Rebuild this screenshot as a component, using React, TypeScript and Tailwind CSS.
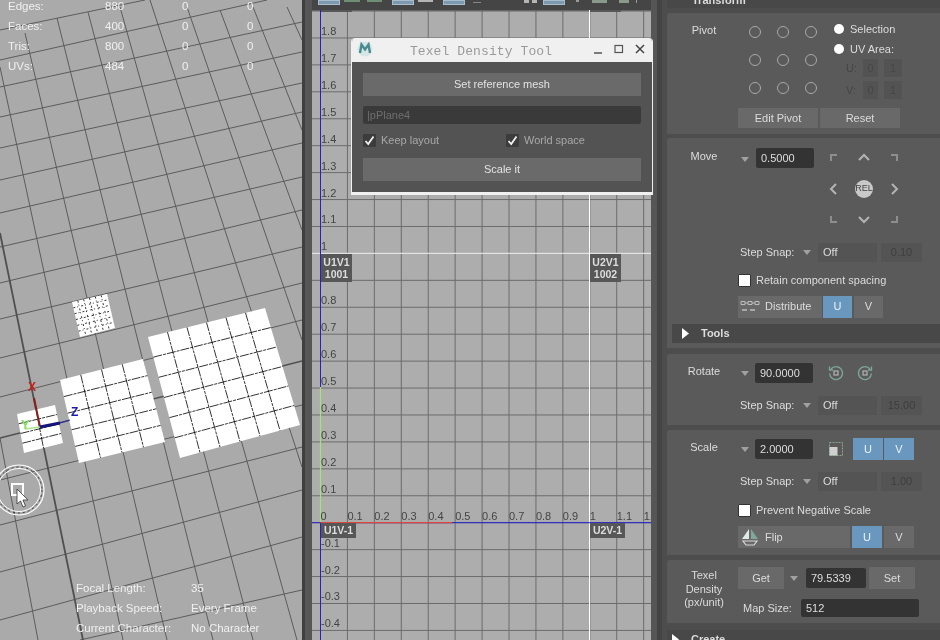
import type { ReactNode } from 'react';

type Pt = [number, number];

const GROUND_ACROSS: [number, number, number, number][] = [
  [0, 30, 145, 0], [0, 60, 267, 0], [0, 87, 302, 22], [0, 117, 302, 52], [0, 148, 302, 83],
  [0, 180, 302, 112], [0, 213, 302, 143], [0, 247, 302, 177], [0, 283, 302, 210], [0, 319, 302, 247],
  [0, 358, 302, 283], [0, 397, 302, 320], [0, 480, 302, 405], [0, 525, 302, 447],
  [0, 572, 302, 490], [0, 620, 302, 537], [80, 640, 302, 590],
];

const GROUND_DEPTH: [number, number, number, number][] = [
  [0, 67, 123, 640], [25, 33, 167, 640], [57, 18, 213, 640], [88, 12, 253, 640], [120, 7, 297, 640],
  [150, 0, 302, 467], [187, 7, 302, 340], [220, 10, 302, 230], [253, 7, 302, 130], [287, 7, 302, 40],
  [0, 438, 38, 640],
];

const SHELLS: { q: [Pt, Pt, Pt, Pt]; cols: number; rows: number; dash: string }[] = [
  { q: [[72, 302], [107, 294], [115, 328], [80, 337]], cols: 6, rows: 6, dash: '2 2 1 3' },
  { q: [[60, 380], [143, 359], [165, 442], [79, 463]], cols: 4, rows: 5, dash: '9 1 3 1' },
  { q: [[148, 337], [265, 308], [300, 425], [180, 458]], cols: 6, rows: 6, dash: '9 1 3 1' },
  { q: [[17, 414], [55, 405], [63, 443], [24, 453]], cols: 2, rows: 4, dash: '9 1 3 1' },
];

function lerp(a: Pt, b: Pt, t: number): Pt {
  return [a[0] + (b[0] - a[0]) * t, a[1] + (b[1] - a[1]) * t];
}

function Shell({ q, cols, rows, dash }: { q: [Pt, Pt, Pt, Pt]; cols: number; rows: number; dash: string }) {
  const lines: [Pt, Pt][] = [];
  for (let i = 1; i < cols; i++) lines.push([lerp(q[0], q[1], i / cols), lerp(q[3], q[2], i / cols)]);
  for (let j = 1; j < rows; j++) lines.push([lerp(q[0], q[3], j / rows), lerp(q[1], q[2], j / rows)]);
  return (
    <g>
      <polygon points={q.map((p) => p.join(',')).join(' ')} fill="#fff" />
      {lines.map(([a, b], i) => (
        <line key={i} x1={a[0]} y1={a[1]} x2={b[0]} y2={b[1]} stroke="#000" strokeWidth={0.8} strokeDasharray={dash} />
      ))}
    </g>
  );
}

function Viewport() {
  return (
    <div className="relative h-full w-[302px] shrink-0 overflow-hidden bg-[#aaaaaa] font-['Liberation_Sans',sans-serif] text-[11.5px] text-[#f0f0f0]">
      <svg width="302" height="640" className="block">
        {GROUND_ACROSS.map(([a, b, c, d], i) => (
          <line key={i} x1={a} y1={b} x2={c} y2={d} stroke="#5c5c5c" strokeWidth={1} />
        ))}
        {GROUND_DEPTH.map(([a, b, c, d], i) => (
          <line key={i} x1={a} y1={b} x2={c} y2={d} stroke="#5c5c5c" strokeWidth={1} />
        ))}
        <line x1="0" y1="438" x2="302" y2="361" stroke="#505050" strokeWidth={1.6} />
        <line x1="0" y1="233" x2="83" y2="640" stroke="#505050" strokeWidth={1.8} />
        {SHELLS.map((s, i) => (
          <Shell key={i} {...s} />
        ))}
        {/* gizmo */}
        <line x1="40" y1="427" x2="34" y2="398" stroke="#8a1f1f" strokeWidth={2} />
        <line x1="40" y1="427" x2="25" y2="429" stroke="#a6e88a" strokeWidth={1.5} />
        <line x1="40" y1="427" x2="60" y2="423" stroke="#14147a" strokeWidth={3} />
        <line x1="60" y1="423" x2="70" y2="420" stroke="#2a2ab0" strokeWidth={1} />
        <text x="28" y="391" className="fill-[#c8201c] text-[12px] font-bold">X</text>
        <text x="21" y="429" className="fill-[#7fe05a] text-[13px] font-bold">Y</text>
        <text x="71" y="416" className="fill-[#1c1ca8] text-[12px] font-bold">Z</text>
        {/* tool cursor */}
        <circle cx="19" cy="490" r="25" fill="none" stroke="#fff" strokeWidth={1.2} />
        <circle cx="19" cy="490" r="23" fill="none" stroke="#222" strokeWidth={0.8} strokeDasharray="2 3" />
        <circle cx="19" cy="490" r="21.5" fill="none" stroke="#fff" strokeWidth={1} />
        <rect x="12" y="484" width="11" height="11" fill="none" stroke="#fff" strokeWidth={2} />
        <path d="M17 489 L17 504 L20.5 501 L23 507 L25.5 506 L23 500 L28 500 Z" fill="#fff" stroke="#333" strokeWidth={0.8} />
      </svg>

      <div className="absolute left-2 top-[-3px] w-[260px]">
        {[
          ['Edges:', '880'],
          ['Faces:', '400'],
          ['Tris:', '800'],
          ['UVs:', '484'],
        ].map(([name, value]) => (
          <div key={name} className="flex h-5 items-center">
            <span className="w-[97px]">{name}</span>
            <span className="w-[77px]">{value}</span>
            <span className="w-[65px]">0</span>
            <span>0</span>
          </div>
        ))}
      </div>

      <div className="absolute left-[76px] top-[579px]">
        {[
          ['Focal Length:', '35'],
          ['Playback Speed:', 'Every Frame'],
          ['Current Character:', 'No Character'],
        ].map(([name, value]) => (
          <div key={name} className="flex h-5 items-center">
            <span className="w-[115px]">{name}</span>
            <span>{value}</span>
          </div>
        ))}
      </div>
    </div>
  );
}

function UvToolbar() {
  const blue = 'h-[5px] border border-[#a9bccb] bg-[#7d99b0]';
  return (
    <div className="flex h-[10px] shrink-0 items-start bg-[#454545]">
      <div className={`ml-[6px] w-[22px] ${blue}`} />
      <div className="ml-[4px] h-[2px] w-[16px] bg-[#6f8f74]" />
      <div className="ml-[7px] h-[2px] w-[15px] bg-[#6f8f74]" />
      <div className={`ml-[10px] w-[22px] ${blue}`} />
      <div className="ml-[4px] h-[2px] w-[15px] bg-[#b5b5b5]" />
      <div className={`ml-[10px] w-[22px] ${blue}`} />
      <div className="ml-[8px] h-[3px] w-[8px] border-b border-[#888]" />
      <div className="ml-[43px] h-[3px] w-[5px] bg-[#b5b5b5]" />
      <div className="ml-[3px] h-[3px] w-[5px] bg-[#b5b5b5]" />
      <div className={`ml-[6px] w-[22px] ${blue}`} />
      <div className="ml-[11px] h-[2px] w-[3px] bg-[#999]" />
      <div className="ml-[13px] h-[3px] w-[15px] bg-[#8a9a8a]" />
      <div className="ml-[12px] h-[3px] w-[10px] bg-[#8a9a8a]" />
      <div className="ml-[7px] h-[3px] w-[1px] bg-[#999]" />
    </div>
  );
}

function TileTag({ children, cls }: { children: ReactNode; cls: string }) {
  return (
    <div className={`absolute bg-[#575757] text-center text-[10.5px] font-bold leading-[12px] text-[#dddddd] ${cls}`}>
      {children}
    </div>
  );
}

const UV_X0 = 8.5;
const UV_Y0 = 512.7;
const STEP = 26.93;

function UvCanvas() {
  const cols = Array.from({ length: 13 }, (_, i) => i);
  const rows = Array.from({ length: 23 }, (_, i) => i - 4);
  const xTicks = ['0', '0.1', '0.2', '0.3', '0.4', '0.5', '0.6', '0.7', '0.8', '0.9', '1', '1.1', '1.2'];
  const yTicks = ['0.1', '0.2', '0.3', '0.4', '0.5', '0.6', '0.7', '0.8', '0.9', '1', '1.1', '1.2', '1.3', '1.4', '1.5', '1.6', '1.7', '1.8'];
  const negTicks = ['-0.1', '-0.2', '-0.3', '-0.4'];
  return (
    <div className="relative min-h-0 flex-1 overflow-hidden bg-[#adadad] font-['Liberation_Sans',sans-serif]">
      <svg width="339" height="630" className="block">
        {cols.map((c) => (
          <line key={c} x1={UV_X0 + c * STEP} y1="0" x2={UV_X0 + c * STEP} y2="630" stroke="#6c6c6c" strokeWidth={1} />
        ))}
        {rows.map((r) => (
          <line key={r} x1="0" y1={UV_Y0 - r * STEP} x2="339" y2={UV_Y0 - r * STEP} stroke="#6c6c6c" strokeWidth={1} />
        ))}
        <line x1="0" y1="0.7" x2="339" y2="0.7" stroke="#666" strokeWidth={1.5} />
        <line x1="0" y1="243.3" x2="339" y2="243.3" stroke="#fff" strokeWidth={1} />
        <line x1="277.5" y1="0" x2="277.5" y2="630" stroke="#fff" strokeWidth={1} />
        <line x1="0" y1="512.7" x2="339" y2="512.7" stroke="#2222cc" strokeWidth={1} />
        <line x1="8.5" y1="0" x2="8.5" y2="630" stroke="#2222cc" strokeWidth={1} />
        <line x1="8.5" y1="512.7" x2="140" y2="512.7" stroke="#d8483c" strokeWidth={1.2} />
        <line x1="8.5" y1="377" x2="8.5" y2="512" stroke="#a6e07a" strokeWidth={1.2} />
        {xTicks.map((t, i) => (
          <text key={t} x={8.5 + i * STEP} y="510" className="fill-[#444] text-[11px]">{t}</text>
        ))}
        {yTicks.map((t, i) => (
          <text key={t} x="9" y={UV_Y0 - (i + 1) * STEP - 3} className="fill-[#444] text-[11px]">{t}</text>
        ))}
        {negTicks.map((t, i) => (
          <text key={t} x="9" y={UV_Y0 + (i + 1) * STEP - 3} className="fill-[#444] text-[11px]">{t}</text>
        ))}
      </svg>
      <div className="absolute left-[9px] top-0 h-[2px] w-[31px] bg-[#575757]" />
      <div className="absolute left-[278px] top-0 h-[2px] w-[31px] bg-[#575757]" />
      <TileTag cls="left-[9px] top-[244px] w-[31px] pt-[2px] h-[28px]">U1V1<br />1001</TileTag>
      <TileTag cls="left-[278px] top-[244px] w-[31px] pt-[2px] h-[28px]">U2V1<br />1002</TileTag>
      <TileTag cls="left-[9px] top-[513px] w-[35px] h-[15px] leading-[15px]">U1V-1</TileTag>
      <TileTag cls="left-[278px] top-[513px] w-[35px] h-[15px] leading-[15px]">U2V-1</TileTag>
    </div>
  );
}

function DialogCheck({ label }: { label: string }) {
  return (
    <div className="flex items-center gap-[5px]">
      <div className="flex h-[13px] w-[13px] items-center justify-center rounded-[1px] bg-[#3c3c3c]">
        <svg width="11" height="11" viewBox="0 0 11 11">
          <path d="M1.5 6 L4.2 9 L9.5 1.5" fill="none" stroke="#f0f0f0" strokeWidth={1.8} />
        </svg>
      </div>
      <span className="text-[11px] text-[#a8a8a8]">{label}</span>
    </div>
  );
}

function TexelDialog() {
  return (
    <div className="absolute left-[351px] top-[38px] h-[157px] w-[302px] overflow-hidden rounded-t-[4px] border-x border-b-[3px] border-[#f0f0f0] bg-[#535353] font-['Liberation_Sans',sans-serif]">
      <div className="relative flex h-6 items-center bg-[#f0f0f0]">
        <svg width="16" height="16" viewBox="0 0 16 16" className="absolute left-[5px] top-[3px]">
          <circle cx="8" cy="8" r="7.5" fill="#d5e6e6" />
          <path d="M3 12 L4.5 3.5 L8 8.5 L11.5 3.5 L13 12" fill="none" stroke="#4a8a90" strokeWidth={2.4} />
        </svg>
        <span className="w-full translate-y-[2px] pr-[42px] text-center font-['Liberation_Mono',monospace] text-[13px] tracking-[0.1px] text-[#9a9a9a]">
          Texel Density Tool
        </span>
        <div className="absolute right-[6px] top-[5px] flex items-center gap-[9px]">
          <svg width="12" height="12" viewBox="0 0 12 12"><path d="M2 10 H10" stroke="#555" strokeWidth={1.4} /></svg>
          <svg width="12" height="12" viewBox="0 0 12 12"><rect x="2" y="2.5" width="7.5" height="7" fill="none" stroke="#555" strokeWidth={1.2} /></svg>
          <svg width="12" height="12" viewBox="0 0 12 12"><path d="M2 2 L10 10 M10 2 L2 10" stroke="#444" strokeWidth={1.5} /></svg>
        </div>
      </div>
      <div className="flex flex-col px-[11px] pt-[11px]">
        <div className="flex h-[23px] items-center justify-center bg-[#6a6a6a] text-[11px] text-[#e2e2e2]">Set reference mesh</div>
        <div className="mt-[10px] flex h-[18px] items-center rounded-[2px] bg-[#3a3a3a] px-1 text-[11px] text-[#6e6e6e]">|pPlane4</div>
        <div className="mt-[9px] flex h-[14px] items-center">
          <div className="w-[143px]"><DialogCheck label="Keep layout" /></div>
          <DialogCheck label="World space" />
        </div>
        <div className="mt-[11px] flex h-[23px] items-center justify-center bg-[#6a6a6a] text-[11px] text-[#e2e2e2]">Scale it</div>
      </div>
    </div>
  );
}

function Tri({ cls = '' }: { cls?: string }) {
  return (
    <svg width="8" height="5" viewBox="0 0 8 5" className={`shrink-0 ${cls}`}>
      <path d="M0 0 H8 L4 5 Z" fill="#a0a0a0" />
    </svg>
  );
}

function Ring() {
  return <div className="h-[12px] w-[12px] rounded-full border border-[#a8a8a8]" />;
}

function Section({ cls, children }: { cls: string; children: ReactNode }) {
  return <div className={`shrink-0 rounded-tl-[3px] bg-[#5a5a5a] ${cls}`}>{children}</div>;
}

function StepSnap({ value, cls = '' }: { value: string; cls?: string }) {
  return (
    <div className={`flex h-[19px] items-center ${cls}`}>
      <span className="ml-[2px] w-[63px]">Step Snap:</span>
      <Tri cls="mr-[7px]" />
      <div className="flex h-[19px] w-[59px] items-center bg-[#545454] px-[5px]">Off</div>
      <div className="ml-[4px] flex h-[19px] w-[41px] items-center justify-center bg-[#545454] text-[#3e3e3e]">{value}</div>
    </div>
  );
}

function ValueBox({ value, cls }: { value: string; cls: string }) {
  return <div className={`flex h-5 items-center rounded-[2px] bg-[#333333] px-[5px] text-[#dedede] ${cls}`}>{value}</div>;
}

function Check({ label, cls = '' }: { label: string; cls?: string }) {
  return (
    <div className={`flex h-[13px] items-center gap-[5px] ${cls}`}>
      <div className="h-[13px] w-[13px] rounded-[1px] border border-[#333] bg-white" />
      <span>{label}</span>
    </div>
  );
}

function AxisBtn({ label, on, cls = 'w-[30px]' }: { label: string; on?: boolean; cls?: string }) {
  return (
    <div className={`flex h-[22px] items-center justify-center ${on ? 'bg-[#6a97bd] text-[#eaf2f8]' : 'bg-[#696969] text-[#dcdcdc]'} ${cls}`}>
      {label}
    </div>
  );
}

function Chevron({ d }: { d: string }) {
  return (
    <svg width="14" height="14" viewBox="0 0 14 14">
      <path d={d} fill="none" stroke="#b4b4b4" strokeWidth={2} />
    </svg>
  );
}

function Corner({ d }: { d: string }) {
  return (
    <svg width="10" height="10" viewBox="0 0 10 10">
      <path d={d} fill="none" stroke="#8e8e8e" strokeWidth={2} />
    </svg>
  );
}

function MovePad() {
  const cell = 'flex h-[30.5px] w-[30px] items-center justify-center';
  return (
    <div className="grid grid-cols-[repeat(3,30px)]">
      <div className={cell}><Corner d="M2 8 V2 H8" /></div>
      <div className={cell}><Chevron d="M2 9 L7 4 L12 9" /></div>
      <div className={cell}><Corner d="M2 2 H8 V8" /></div>
      <div className={cell}><Chevron d="M9 2 L4 7 L9 12" /></div>
      <div className={cell}>
        <div className="flex h-[18px] w-[18px] items-center justify-center rounded-full bg-[#c9c9c9] text-[9px] text-[#444]">REL</div>
      </div>
      <div className={cell}><Chevron d="M5 2 L10 7 L5 12" /></div>
      <div className={cell}><Corner d="M2 2 V8 H8" /></div>
      <div className={cell}><Chevron d="M2 5 L7 10 L12 5" /></div>
      <div className={cell}><Corner d="M8 2 V8 H2" /></div>
    </div>
  );
}

function RotateGlyph({ flip }: { flip?: boolean }) {
  return (
    <svg width="16" height="16" viewBox="0 0 16 16" className={flip ? '-scale-x-100' : ''}>
      <path d="M3 4 A6.5 6.5 0 1 1 1.6 8.5" fill="none" stroke="#7fa89c" strokeWidth={1.3} />
      <path d="M1.5 1.5 V5 H5" fill="none" stroke="#7fa89c" strokeWidth={1.3} />
      <rect x="6" y="6" width="4" height="4" fill="none" stroke="#c4c4c4" strokeWidth={1} />
    </svg>
  );
}

function SideBar({ label, cls }: { label: string; cls: string }) {
  return (
    <div className={`flex shrink-0 items-center bg-[#484848] font-bold ${cls}`}>
      <svg width="7" height="11" viewBox="0 0 7 11" className="shrink-0"><path d="M0 0 L7 5.5 L0 11 Z" fill="#fff" /></svg>
      <span className="ml-3">{label}</span>
    </div>
  );
}

function SidePanel() {
  return (
    <div className="flex h-[640px] w-[278px] shrink-0 flex-col overflow-hidden bg-[#4d4d4d] pl-[5px] font-['Liberation_Sans',sans-serif] text-[11px] text-[#dcdcdc]">
      <div className="flex h-[8px] shrink-0 items-end overflow-hidden bg-[#484848] pl-[25px] font-bold leading-none">
        <span className="translate-y-[-2px]">Transform</span>
      </div>
      {/* Pivot */}
      <Section cls="mt-[5px] flex h-[121px] pt-[10px]">
        <div className="-mt-[1px] w-[71px] pl-[3px] text-center">Pivot</div>
        <div>
          <div className="flex h-[85px]">
            <div className="ml-[11px] mt-[3px] grid h-[68px] grid-cols-[repeat(3,12px)] grid-rows-[repeat(3,12px)] gap-x-4 gap-y-4">
              {Array.from({ length: 9 }, (_, i) => <Ring key={i} />)}
            </div>
            <div className="ml-[17px]">
              <div className="flex h-[12px] items-center gap-[6px]">
                <div className="h-[10px] w-[10px] rounded-full bg-white" />
                <span>Selection</span>
              </div>
              <div className="mt-2 flex h-[12px] items-center gap-[6px]">
                <div className="h-[10px] w-[10px] rounded-full bg-white" />
                <span>UV Area:</span>
              </div>
              {['U:', 'V:'].map((n) => (
                <div key={n} className="mt-[4px] flex h-[18px] items-center text-[#464646]">
                  <span className="ml-[12px] w-[17px]">{n}</span>
                  <div className="flex h-[18px] w-[15px] items-center justify-center bg-[#535353]">0</div>
                  <div className="ml-[6px] flex h-[18px] w-[18px] items-center justify-center bg-[#535353]">1</div>
                </div>
              ))}
            </div>
          </div>
          <div className="flex gap-[2px]">
            <div className="flex h-5 w-[80px] items-center justify-center bg-[#696969]">Edit Pivot</div>
            <div className="flex h-5 w-[80px] items-center justify-center bg-[#696969]">Reset</div>
          </div>
        </div>
      </Section>
      {/* Move */}
      <Section cls="mt-[4px] flex h-[210px] flex-col pt-[10px]">
        <div className="flex">
          <div className="w-[71px] pl-[3px] text-center">Move</div>
          <div>
            <div className="flex">
              <Tri cls="ml-[3px] mt-[9px]" />
              <ValueBox value="0.5000" cls="ml-[7px] w-[58px]" />
              <div className="-mt-[5px] ml-[5px]"><MovePad /></div>
            </div>
            <StepSnap value="0.10" cls="mt-[8px]" />
            <Check label="Retain component spacing" cls="mt-[12px]" />
            <div className="mt-[9px] flex h-[22px]">
              <div className="flex w-[84px] items-center bg-[#696969] pl-[2px]">
                <svg width="20" height="14" viewBox="0 0 20 14" className="shrink-0">
                  <path d="M1 1.5 h4 v3 h-4 z M8 1.5 h4 v3 h-4 z M15 1.5 h4 v3 h-4 z" fill="none" stroke="#bdbdbd" />
                  <path d="M5 3 h3 M12 3 h3" stroke="#bdbdbd" />
                  <path d="M2 10 h5 M10 10 h5" stroke="#bdbdbd" strokeWidth={1.4} />
                </svg>
                <span className="ml-[5px]">Distribute</span>
              </div>
              <AxisBtn label="U" on cls="ml-[1px] w-[29px]" />
              <AxisBtn label="V" cls="ml-[2px] w-[29px]" />
            </div>
          </div>
        </div>
        <SideBar label="Tools" cls="mt-[6px] ml-[5px] h-[19px] pl-[10px]" />
      </Section>
      {/* Rotate */}
      <Section cls="mt-[6px] h-[71px] pt-[9px]">
        <div className="flex">
          <div className="w-[71px] pl-[3px] text-center">Rotate</div>
          <div>
            <div className="flex items-center">
              <Tri cls="ml-[3px]" />
              <ValueBox value="90.0000" cls="ml-[6px] w-[58px]" />
              <div className="ml-[15px]"><RotateGlyph /></div>
              <div className="ml-[13px]"><RotateGlyph flip /></div>
            </div>
            <StepSnap value="15.00" cls="mt-[13px]" />
          </div>
        </div>
      </Section>
      {/* Scale */}
      <Section cls="mt-[5px] h-[125px] pt-[8px]">
        <div className="flex">
          <div className="mt-[1px] w-[71px] pl-[3px] text-center">Scale</div>
          <div>
            <div className="flex items-center">
              <Tri cls="ml-[3px]" />
              <ValueBox value="2.0000" cls="ml-[6px] w-[58px]" />
              <svg width="16" height="16" viewBox="0 0 16 16" className="ml-[15px]">
                <rect x="1.5" y="1.5" width="13" height="13" fill="none" stroke="#86a88e" strokeDasharray="2 1" />
                <rect x="1.5" y="6" width="8" height="8.5" fill="#d0d0d0" />
              </svg>
              <AxisBtn label="U" on cls="ml-[9px] w-[30px]" />
              <AxisBtn label="V" on cls="ml-[1px] w-[30px]" />
            </div>
            <StepSnap value="1.00" cls="mt-[12px]" />
            <Check label="Prevent Negative Scale" cls="mt-[13px]" />
            <div className="mt-[9px] flex h-[22px]">
              <div className="flex w-[112px] items-center bg-[#696969] pl-[3px]">
                <svg width="18" height="18" viewBox="0 0 18 18" className="shrink-0">
                  <path d="M8 1 L1 11 H8 Z" fill="#dfe8e4" />
                  <path d="M10 1 L17 11 H10 Z" fill="#7fa89c" />
                  <path d="M2 13 H16 L13 17 H5 Z" fill="none" stroke="#d8d8d8" strokeWidth={1.2} />
                </svg>
                <span className="ml-[6px]">Flip</span>
              </div>
              <AxisBtn label="U" on cls="ml-[2px] w-[30px]" />
              <AxisBtn label="V" cls="ml-[2px] w-[30px]" />
            </div>
          </div>
        </div>
      </Section>
      {/* Texel density */}
      <Section cls="mt-[5px] flex h-[63px] pt-[7px]">
        <div className="w-[71px] pl-[3px] pt-[2px] text-center leading-[13.5px]">Texel<br />Density<br />(px/unit)</div>
        <div>
          <div className="flex items-center">
            <div className="flex h-[22px] w-[46px] items-center justify-center bg-[#696969]">Get</div>
            <Tri cls="ml-[6px]" />
            <ValueBox value="79.5339" cls="ml-[8px] w-[60px]" />
            <div className="ml-[3px] flex h-[22px] w-[46px] items-center justify-center bg-[#696969]">Set</div>
          </div>
          <div className="mt-[10px] flex items-center">
            <span className="ml-[5px] w-[58px]">Map Size:</span>
            <div className="flex h-[18px] w-[118px] items-center rounded-[2px] bg-[#333333] px-[5px] text-[#dedede]">512</div>
          </div>
        </div>
      </Section>
      <SideBar label="Create" cls="mt-[7px] h-[19px] pl-[5px]" />
    </div>
  );
}

export default function App() {
  return (
    <div className="relative flex h-[640px] w-[940px] overflow-hidden bg-[#444444] blur-[0.35px]">
      <Viewport />
      <div className="h-full w-[3px] shrink-0 bg-[#3f3f3f]" />
      <div className="h-full w-[7px] shrink-0 bg-[#565656]" />
      <div className="flex h-full w-[339px] shrink-0 flex-col">
        <UvToolbar />
        <UvCanvas />
      </div>
      <div className="h-full w-[6px] shrink-0 bg-[#565656]" />
      <div className="h-full w-[5px] shrink-0 bg-[#444444]" />
      <SidePanel />
      <TexelDialog />
    </div>
  );
}
